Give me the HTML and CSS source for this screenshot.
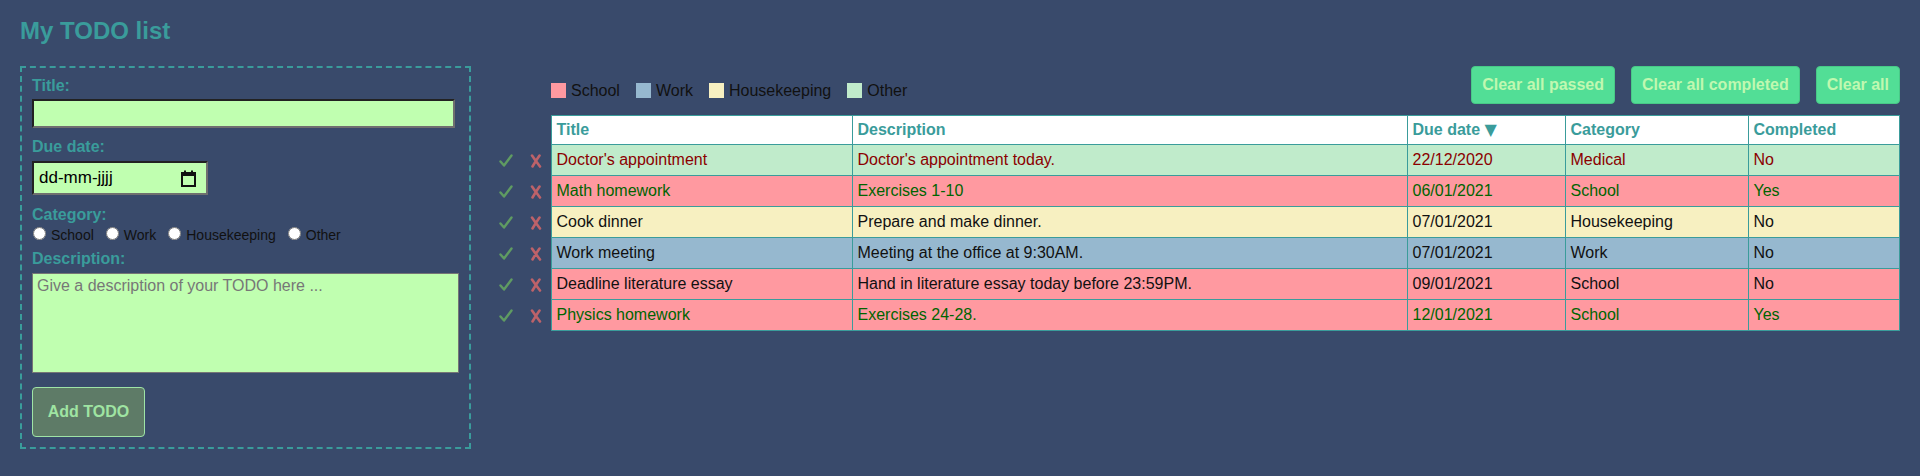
FILE: index.html
```html
<!DOCTYPE html>
<html lang="nl">
<head>
<meta charset="utf-8">
<title>My TODO list</title>
<link rel="stylesheet" href="styles.css">
</head>
<body>
<h1 class="page-title">My TODO list</h1>
<div class="main">
  <form class="todo-form">
    <label class="field-label label-title" for="title">Title:</label>
    <input class="text-input" id="title" type="text">
    <label class="field-label label-gap">Due date:</label>
    <div class="date-input">
      <span class="date-text">dd-mm-jjjj</span>
      <svg class="cal-icon" width="15" height="17" viewBox="0 0 15 17">
        <rect x="1" y="3" width="13" height="13" fill="none" stroke="#111" stroke-width="2"/>
        <rect x="1" y="3" width="13" height="3" fill="#111"/>
        <rect x="3" y="0.5" width="2" height="3" fill="#111"/>
        <rect x="10" y="0.5" width="2" height="3" fill="#111"/>
      </svg>
    </div>
    <label class="field-label label-gap2">Category:</label>
    <div class="radio-row">
      <label class="radio-opt"><input type="radio" name="cat">School</label>
      <label class="radio-opt"><input type="radio" name="cat">Work</label>
      <label class="radio-opt"><input type="radio" name="cat">Housekeeping</label>
      <label class="radio-opt"><input type="radio" name="cat">Other</label>
    </div>
    <label class="field-label label-gap3" for="desc">Description:</label>
    <textarea class="desc-input" id="desc" placeholder="Give a description of your TODO here ..."></textarea>
    <button type="button" class="add-btn">Add TODO</button>
  </form>

  <section class="list-area">
    <div class="top-bar">
      <div class="legend">
        <span class="legend-item"><span class="swatch sw-school"></span>School</span>
        <span class="legend-item"><span class="swatch sw-work"></span>Work</span>
        <span class="legend-item"><span class="swatch sw-house"></span>Housekeeping</span>
        <span class="legend-item"><span class="swatch sw-other"></span>Other</span>
      </div>
      <div class="actions">
        <button type="button" class="clear-btn">Clear all passed</button>
        <button type="button" class="clear-btn">Clear all completed</button>
        <button type="button" class="clear-btn">Clear all</button>
      </div>
    </div>
    <table class="todo-table">
      <colgroup>
        <col class="c-act"><col class="c-act">
        <col class="c-title"><col class="c-desc"><col class="c-date"><col class="c-cat"><col class="c-comp">
      </colgroup>
      <thead>
        <tr>
          <th class="act"></th><th class="act"></th>
          <th>Title</th><th>Description</th><th>Due date <span class="arrow">▼</span></th><th>Category</th><th>Completed</th>
        </tr>
      </thead>
      <tbody>
        <tr class="row-other passed">
          <td class="act"><svg class="ico" width="14" height="14" viewBox="0 0 14 14"><path class="ico-check" d="M1.5 7.5 L5 11.5 L12.5 1.5"/></svg></td>
          <td class="act"><svg class="ico" width="14" height="14" viewBox="0 0 14 14"><path class="ico-cross" d="M3 1.5 Q6 6 11 12.5 M10.5 1.5 Q7 6.5 3.5 12.5"/></svg></td>
          <td>Doctor's appointment</td><td>Doctor's appointment today.</td><td>22/12/2020</td><td>Medical</td><td>No</td>
        </tr>
        <tr class="row-school done">
          <td class="act"><svg class="ico" width="14" height="14" viewBox="0 0 14 14"><path class="ico-check" d="M1.5 7.5 L5 11.5 L12.5 1.5"/></svg></td>
          <td class="act"><svg class="ico" width="14" height="14" viewBox="0 0 14 14"><path class="ico-cross" d="M3 1.5 Q6 6 11 12.5 M10.5 1.5 Q7 6.5 3.5 12.5"/></svg></td>
          <td>Math homework</td><td>Exercises 1-10</td><td>06/01/2021</td><td>School</td><td>Yes</td>
        </tr>
        <tr class="row-house">
          <td class="act"><svg class="ico" width="14" height="14" viewBox="0 0 14 14"><path class="ico-check" d="M1.5 7.5 L5 11.5 L12.5 1.5"/></svg></td>
          <td class="act"><svg class="ico" width="14" height="14" viewBox="0 0 14 14"><path class="ico-cross" d="M3 1.5 Q6 6 11 12.5 M10.5 1.5 Q7 6.5 3.5 12.5"/></svg></td>
          <td>Cook dinner</td><td>Prepare and make dinner.</td><td>07/01/2021</td><td>Housekeeping</td><td>No</td>
        </tr>
        <tr class="row-work">
          <td class="act"><svg class="ico" width="14" height="14" viewBox="0 0 14 14"><path class="ico-check" d="M1.5 7.5 L5 11.5 L12.5 1.5"/></svg></td>
          <td class="act"><svg class="ico" width="14" height="14" viewBox="0 0 14 14"><path class="ico-cross" d="M3 1.5 Q6 6 11 12.5 M10.5 1.5 Q7 6.5 3.5 12.5"/></svg></td>
          <td>Work meeting</td><td>Meeting at the office at 9:30AM.</td><td>07/01/2021</td><td>Work</td><td>No</td>
        </tr>
        <tr class="row-school">
          <td class="act"><svg class="ico" width="14" height="14" viewBox="0 0 14 14"><path class="ico-check" d="M1.5 7.5 L5 11.5 L12.5 1.5"/></svg></td>
          <td class="act"><svg class="ico" width="14" height="14" viewBox="0 0 14 14"><path class="ico-cross" d="M3 1.5 Q6 6 11 12.5 M10.5 1.5 Q7 6.5 3.5 12.5"/></svg></td>
          <td>Deadline literature essay</td><td>Hand in literature essay today before 23:59PM.</td><td>09/01/2021</td><td>School</td><td>No</td>
        </tr>
        <tr class="row-school done">
          <td class="act"><svg class="ico" width="14" height="14" viewBox="0 0 14 14"><path class="ico-check" d="M1.5 7.5 L5 11.5 L12.5 1.5"/></svg></td>
          <td class="act"><svg class="ico" width="14" height="14" viewBox="0 0 14 14"><path class="ico-cross" d="M3 1.5 Q6 6 11 12.5 M10.5 1.5 Q7 6.5 3.5 12.5"/></svg></td>
          <td>Physics homework</td><td>Exercises 24-28.</td><td>12/01/2021</td><td>School</td><td>Yes</td>
        </tr>
      </tbody>
    </table>
  </section>
</div>
</body>
</html>
```
FILE: styles.css
```css
html, body {
  margin: 0;
  background: #394a6b;
}
body {
  padding: 0 20px;
  font-family: "Liberation Sans", Arial, sans-serif;
  font-size: 16px;
  color: #111;
}
.page-title {
  margin: 17px 0 21px;
  font-size: 24px;
  line-height: 28px;
  font-weight: bold;
  color: #3a9c9b;
}
.main {
  display: flex;
  align-items: flex-start;
  gap: 20px;
}

/* ---------- form ---------- */
.todo-form {
  flex: none;
  width: 451px;
  box-sizing: border-box;
  border: 2px dashed #3a9c9b;
  padding: 9px 10px 10px;
  display: flex;
  flex-direction: column;
  align-items: flex-start;
}
.field-label {
  display: block;
  font-size: 16px;
  line-height: 18px;
  font-weight: bold;
  color: #3a9c9b;
}
.label-gap { margin-top: 10px; }
.label-gap2 { margin-top: 11px; }
.label-gap3 { margin-top: 6px; }
.text-input {
  margin: 4px 0 0;
  width: 423px;
  height: 29px;
  box-sizing: border-box;
  background: #c0ffb0;
  border: 2px solid;
  border-color: #222 #6f6f6f #6f6f6f #222;
  padding: 1px 4px;
  font: 16px "Liberation Sans", Arial, sans-serif;
}
.date-input {
  margin-top: 5px;
  width: 176px;
  height: 34px;
  box-sizing: border-box;
  background: #c0ffb0;
  border: 2px solid;
  border-color: #222 #6f6f6f #6f6f6f #222;
  padding: 0 10px 0 5px;
  display: flex;
  align-items: center;
  justify-content: space-between;
}
.date-text {
  font-size: 17px;
  line-height: 20px;
  color: #000;
}
.cal-icon { display: block; }
.radio-row {
  display: flex;
  gap: 11px;
  height: 18px;
  margin-top: 2px;
  align-items: center;
  font-size: 14px;
  line-height: 18px;
  color: #111;
}
.radio-opt {
  display: inline-flex;
  align-items: center;
  gap: 5px;
}
.radio-opt input {
  margin: 0 0 0 1px;
  width: 13px;
  height: 13px;
  position: relative;
  top: -2px;
}
.desc-input {
  margin: 5px 0 0;
  width: 427px;
  height: 100px;
  box-sizing: border-box;
  background: #c0ffb0;
  border: 1px solid #767676;
  padding: 2px 4px;
  font: 16px/19px "Liberation Sans", Arial, sans-serif;
  resize: none;
}
.desc-input::placeholder { color: #777; }
.add-btn {
  margin-top: 14px;
  height: 50px;
  width: 113px;
  padding: 0;
  background: #5e7b67;
  border: 1px solid #9fe4a6;
  border-radius: 4px;
  color: #9fe4a2;
  font: bold 16px "Liberation Sans", Arial, sans-serif;
}

/* ---------- list ---------- */
.list-area {
  flex: 1;
  min-width: 0;
}
.top-bar {
  display: flex;
  justify-content: space-between;
  align-items: flex-start;
  height: 38px;
}
.legend {
  display: flex;
  gap: 16px;
  padding-left: 60px;
  margin-top: 16px;
  font-size: 16px;
  line-height: 18px;
  color: #111;
}
.legend-item {
  display: inline-flex;
  align-items: center;
  gap: 5px;
}
.swatch {
  display: inline-block;
  width: 15px;
  height: 15px;
  position: relative;
  top: -1px;
}
.sw-school { background: #ff99a0; }
.sw-work { background: #96b8cf; }
.sw-house { background: #f7f0c1; }
.sw-other { background: #c0ebcb; }
.actions {
  display: flex;
  gap: 16px;
}
.clear-btn {
  height: 38px;
  padding: 0 10px;
  background: #52de96;
  border: 1px solid #48c987;
  border-radius: 4px;
  color: #c0f8b0;
  font: bold 16px "Liberation Sans", Arial, sans-serif;
}

.todo-table {
  margin-top: 11px;
  width: 100%;
  table-layout: fixed;
  border-collapse: collapse;
  font-size: 16px;
  line-height: 18px;
}
.c-act { width: 30px; }
.c-title { width: 301px; }
.c-desc { width: 555px; }
.c-date { width: 158px; }
.c-cat { width: 183px; }
.todo-table th,
.todo-table td {
  border: 1px solid #3a9c9b;
  padding: 6px 5px;
  text-align: left;
  white-space: nowrap;
  overflow: hidden;
}
.todo-table th {
  background: #fff;
  color: #3a9c9b;
  font-weight: bold;
  padding: 5px 5px;
}
.todo-table th.act,
.todo-table td.act {
  background: transparent;
  border: none;
  padding: 6px 0;
  text-align: center;
}
.ico {
  display: block;
  margin: 2px auto 0;
}
.ico-check {
  fill: none;
  stroke: #5f9b62;
  stroke-width: 2.4;
  stroke-linecap: round;
  stroke-linejoin: round;
}
.ico-cross {
  fill: none;
  stroke: #bd6269;
  stroke-width: 2.6;
  stroke-linecap: round;
}
.arrow {
  font-family: "DejaVu Sans", sans-serif;
  font-size: 16px;
}
.row-school td:not(.act) { background: #ff99a0; }
.row-work td:not(.act) { background: #96b8cf; }
.row-house td:not(.act) { background: #f7f0c1; }
.row-other td:not(.act) { background: #c0ebcb; }
.passed td:not(.act) { color: #8b0000; }
.done td:not(.act) { color: #006400; }
```
